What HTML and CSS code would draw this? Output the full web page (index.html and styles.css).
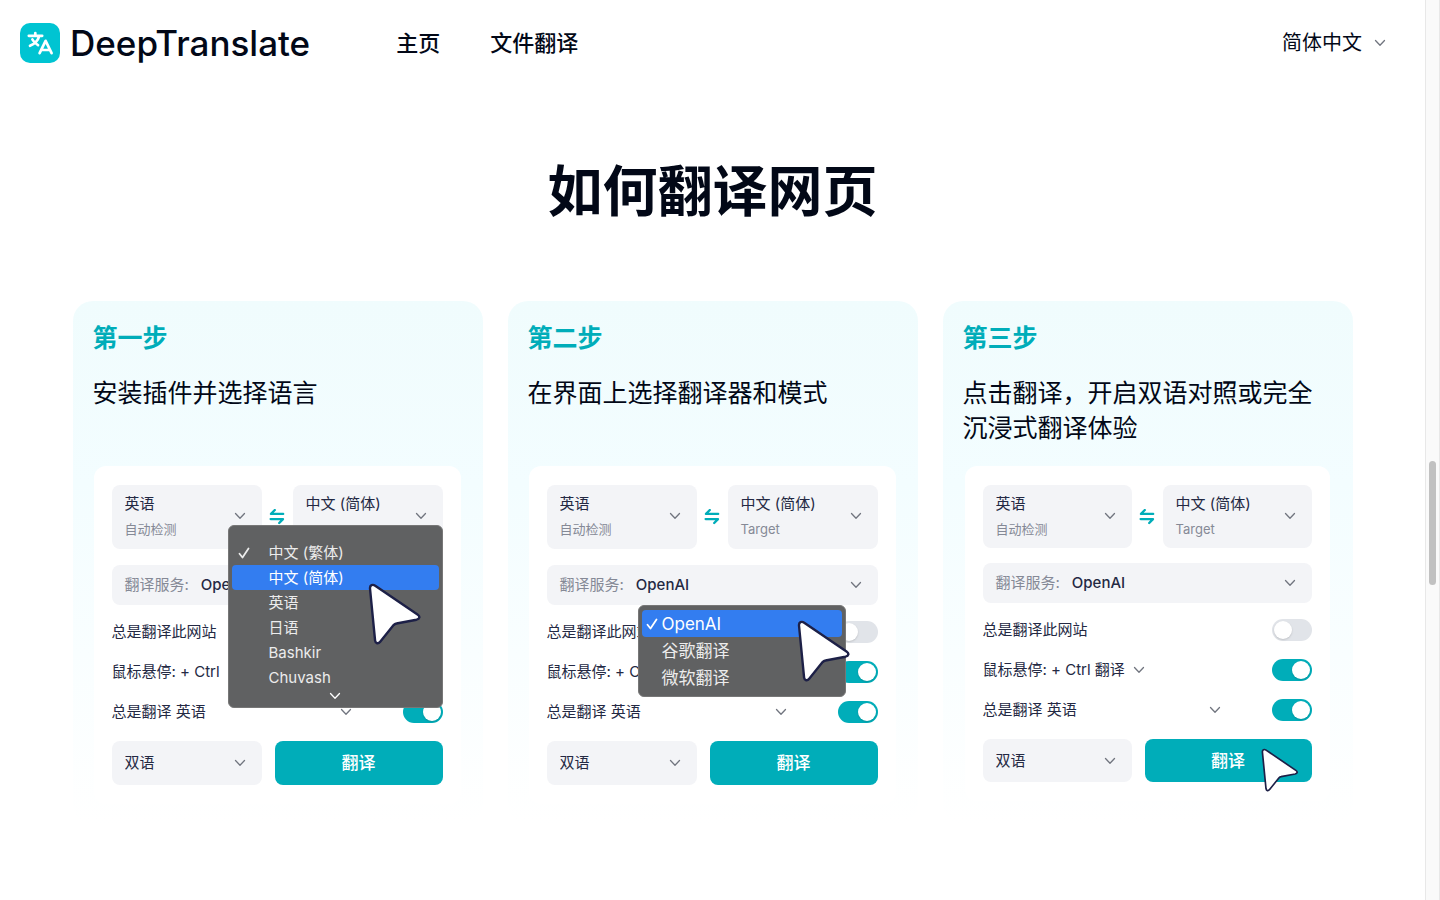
FILE: index.html
```html
<!DOCTYPE html>
<html lang="zh-CN">
<head>
    <meta charset="UTF-8">
    <meta name="viewport" content="width=device-width, initial-scale=1.0">
    <title>DeepTranslate</title>
    <link rel="stylesheet" href="styles.css">
</head>
<body>
    <!-- 公用图标 -->
    <svg class="sprite" aria-hidden="true">
        <symbol id="chevron" viewBox="0 0 12 8"><path d="M1.500 1.500 6 6.200l4.500-4.700" fill="none" stroke="currentColor" stroke-width="1.300" stroke-linecap="round" stroke-linejoin="round"/></symbol>
        <symbol id="swap" viewBox="0 0 16 16"><path d="M5.800 1 2 4.900h12.200M1.600 10.100H14l-3.800 3.900" fill="none" stroke="currentColor" stroke-width="2.300" stroke-linecap="round" stroke-linejoin="round"/></symbol>
        <symbol id="check" viewBox="0 0 12 12"><path d="M1.500 6.800 4.500 10.500 10.500 1.500" fill="none" stroke="currentColor" stroke-width="1.800" stroke-linecap="round" stroke-linejoin="round"/></symbol>
        <symbol id="cursor" viewBox="0 0 54 62"><path d="M2 5.500C1.700 2.200 4.600.900 7.200 2.700L49.500 31.500c3 2 2.200 4.500-1 5.200L28.500 40.500c-1.200.200-2 .600-2.900 1.600L12.200 58.800c-2 2.400-4.700 1.800-5.100-1.200z" fill="#fff" stroke="#1d2047" stroke-width="2.400"/></symbol>
    </svg>

    <div class="page">
        <!-- 顶部导航 -->
        <header class="header">
            <a class="logo" href="#">
                <svg class="logo-icon" viewBox="0 0 40 40" aria-hidden="true">
                    <rect width="40" height="40" rx="10" fill="#00c4d2"/>
                    <path d="M8.800 12.800h13.400M15.300 10v2.500M19.200 13.200c-1.200 4.300-4.400 7.700-9.200 9.600M12.400 16.500c1.300 2.500 3.200 4.300 5.600 5.700M19.600 30.200l6-12.400 6 12.400M21.800 27h7.800" fill="none" stroke="#fff" stroke-width="2.700" stroke-linecap="round" stroke-linejoin="round"/>
                </svg>
                <span>DeepTranslate</span>
            </a>
            <nav class="nav">
                <a href="#">主页</a>
                <a href="#">文件翻译</a>
            </nav>
            <button class="language" type="button">
                简体中文
                <svg class="chevron" aria-hidden="true"><use href="#chevron"/></svg>
            </button>
        </header>

        <main class="guide">
            <h1>如何翻译网页</h1>
            <div class="steps">
                <!-- 第一步 -->
                <section class="step">
                    <h2>第一步</h2>
                    <p>安装插件并选择语言</p>
                    <div class="panel">
                        <div class="languages">
                            <label class="field tall">
                                <select><option>英语</option></select>
                                <span class="hint">自动检测</span>
                                <svg class="chevron" aria-hidden="true"><use href="#chevron"/></svg>
                            </label>
                            <svg class="swap" aria-hidden="true"><use href="#swap"/></svg>
                            <label class="field tall">
                                <select><option>中文 (简体)</option></select>
                                <svg class="chevron" aria-hidden="true"><use href="#chevron"/></svg>
                            </label>
                        </div>
                        <label class="field service">
                            <span class="service-name">翻译服务:</span>
                            <select><option>OpenAI</option></select>
                            <svg class="chevron" aria-hidden="true"><use href="#chevron"/></svg>
                        </label>
                        <div class="options">
                            <div class="option"><span>总是翻译此网站</span></div>
                            <div class="option"><span>鼠标悬停: + Ctrl</span></div>
                            <div class="option">
                                <label for="always-1">总是翻译 英语</label>
                                <svg class="chevron far" aria-hidden="true"><use href="#chevron"/></svg>
                                <input class="toggle" id="always-1" type="checkbox" checked>
                            </div>
                        </div>
                        <div class="actions">
                            <label class="field">
                                <select aria-label="显示模式"><option>双语</option></select>
                                <svg class="chevron" aria-hidden="true"><use href="#chevron"/></svg>
                            </label>
                            <button class="translate" type="button">翻译</button>
                        </div>
                        <div class="menu language-menu">
                            <ul>
                                <li><svg class="check" aria-hidden="true"><use href="#check"/></svg>中文 (繁体)</li>
                                <li class="active">中文 (简体)</li>
                                <li>英语</li>
                                <li>日语</li>
                                <li>Bashkir</li>
                                <li>Chuvash</li>
                            </ul>
                            <svg class="chevron more" aria-hidden="true"><use href="#chevron"/></svg>
                        </div>
                        <svg class="cursor cursor-language" aria-hidden="true"><use href="#cursor"/></svg>
                    </div>
                </section>

                <!-- 第二步 -->
                <section class="step">
                    <h2>第二步</h2>
                    <p>在界面上选择翻译器和模式</p>
                    <div class="panel">
                        <div class="languages">
                            <label class="field tall">
                                <select><option>英语</option></select>
                                <span class="hint">自动检测</span>
                                <svg class="chevron" aria-hidden="true"><use href="#chevron"/></svg>
                            </label>
                            <svg class="swap" aria-hidden="true"><use href="#swap"/></svg>
                            <label class="field tall">
                                <select><option>中文 (简体)</option></select>
                                <span class="hint">Target</span>
                                <svg class="chevron" aria-hidden="true"><use href="#chevron"/></svg>
                            </label>
                        </div>
                        <label class="field service">
                            <span class="service-name">翻译服务:</span>
                            <select><option>OpenAI</option></select>
                            <svg class="chevron" aria-hidden="true"><use href="#chevron"/></svg>
                        </label>
                        <div class="options">
                            <div class="option">
                                <label for="site-2">总是翻译此网站</label>
                                <input class="toggle" id="site-2" type="checkbox">
                            </div>
                            <div class="option">
                                <label for="hover-2">鼠标悬停: + Ctrl</label>
                                <input class="toggle" id="hover-2" type="checkbox" checked>
                            </div>
                            <div class="option">
                                <label for="always-2">总是翻译 英语</label>
                                <svg class="chevron far" aria-hidden="true"><use href="#chevron"/></svg>
                                <input class="toggle" id="always-2" type="checkbox" checked>
                            </div>
                        </div>
                        <div class="actions">
                            <label class="field">
                                <select aria-label="显示模式"><option>双语</option></select>
                                <svg class="chevron" aria-hidden="true"><use href="#chevron"/></svg>
                            </label>
                            <button class="translate" type="button">翻译</button>
                        </div>
                        <div class="menu service-menu">
                            <ul>
                                <li class="active"><svg class="check" aria-hidden="true"><use href="#check"/></svg>OpenAI</li>
                                <li>谷歌翻译</li>
                                <li>微软翻译</li>
                            </ul>
                        </div>
                        <svg class="cursor cursor-service" aria-hidden="true"><use href="#cursor"/></svg>
                    </div>
                </section>

                <!-- 第三步 -->
                <section class="step">
                    <h2>第三步</h2>
                    <p>点击翻译，开启双语对照或完全沉浸式翻译体验</p>
                    <div class="panel compact">
                        <div class="languages">
                            <label class="field tall">
                                <select><option>英语</option></select>
                                <span class="hint">自动检测</span>
                                <svg class="chevron" aria-hidden="true"><use href="#chevron"/></svg>
                            </label>
                            <svg class="swap" aria-hidden="true"><use href="#swap"/></svg>
                            <label class="field tall">
                                <select><option>中文 (简体)</option></select>
                                <span class="hint">Target</span>
                                <svg class="chevron" aria-hidden="true"><use href="#chevron"/></svg>
                            </label>
                        </div>
                        <label class="field service">
                            <span class="service-name">翻译服务:</span>
                            <select><option>OpenAI</option></select>
                            <svg class="chevron" aria-hidden="true"><use href="#chevron"/></svg>
                        </label>
                        <div class="options">
                            <div class="option">
                                <label for="site-3">总是翻译此网站</label>
                                <input class="toggle" id="site-3" type="checkbox">
                            </div>
                            <div class="option">
                                <label for="hover-3">鼠标悬停: + Ctrl 翻译</label>
                                <svg class="chevron" aria-hidden="true"><use href="#chevron"/></svg>
                                <input class="toggle" id="hover-3" type="checkbox" checked>
                            </div>
                            <div class="option">
                                <label for="always-3">总是翻译 英语</label>
                                <svg class="chevron far" aria-hidden="true"><use href="#chevron"/></svg>
                                <input class="toggle" id="always-3" type="checkbox" checked>
                            </div>
                        </div>
                        <div class="actions">
                            <label class="field">
                                <select aria-label="显示模式"><option>双语</option></select>
                                <svg class="chevron" aria-hidden="true"><use href="#chevron"/></svg>
                            </label>
                            <button class="translate" type="button">翻译</button>
                        </div>
                        <svg class="cursor cursor-translate" aria-hidden="true"><use href="#cursor"/></svg>
                    </div>
                </section>
            </div>
        </main>
    </div>

    <!-- 滚动条 -->
    <div class="scrollbar"><div class="thumb"></div></div>
</body>
</html>
```

FILE: styles.css
```css
* {
    margin: 0;
    padding: 0;
    box-sizing: border-box;
}

body {
    display: flex;
    min-height: 100vh;
    background: #fff;
    color: #020817;
    font-family: Inter, "Noto Sans CJK SC", sans-serif;
}

a {
    color: inherit;
    text-decoration: none;
}

button,
select {
    border: 0;
    background: none;
    color: inherit;
    font: inherit;
}

ul {
    list-style: none;
}

.sprite {
    position: absolute;
    width: 0;
    height: 0;
}

.page {
    flex: 1;
    min-width: 0;
}

/* 顶部导航 */
.header {
    display: flex;
    align-items: center;
    height: 86px;
    padding: 0 39px 0 20px;
    line-height: 24px;
}

.logo {
    display: flex;
    align-items: center;
    gap: 10px;
    font-size: 35px;
    font-weight: 500;
}

.logo-icon {
    width: 40px;
    height: 40px;
}

.nav {
    display: flex;
    gap: 50px;
    margin-left: 86px;
    font-size: 22px;
    font-weight: 500;
}

.language {
    display: flex;
    align-items: center;
    gap: 12px;
    margin-left: auto;
    font-size: 20px;
}

.chevron {
    flex: none;
    width: 12px;
    height: 8px;
    color: #71757f;
}

/* 步骤说明 */
.guide {
    max-width: 1280px;
    margin: 0 auto;
    padding-top: 65px;
}

.guide h1 {
    font-size: 55px;
    font-weight: 700;
    line-height: 80px;
    text-align: center;
}

.steps {
    display: grid;
    grid-template-columns: repeat(3, 1fr);
    gap: 25px;
    margin-top: 70px;
}

.step {
    padding: 20px;
    border-radius: 20px;
    background: linear-gradient(#f0fcfd, #f3fdff 35%, #fff);
}

.step h2 {
    margin-bottom: 20px;
    color: #00adb9;
    font-size: 25px;
    font-weight: 700;
    line-height: 35px;
}

.step p {
    min-height: 70px;
    margin-bottom: 20px;
    font-size: 25px;
    line-height: 35px;
}

/* 插件面板 */
.panel {
    position: relative;
    margin: 0 2px 0 1px;
    padding: 19px 18px;
    border-radius: 12px;
    background: #fff;
    color: #242943;
    font-size: 15px;
    line-height: 20px;
}

.languages {
    display: flex;
    align-items: center;
    justify-content: space-between;
}

.languages .field {
    width: 150px;
}

.field {
    display: flex;
    align-items: center;
    height: 44px;
    padding: 0 16px 0 13px;
    border-radius: 8px;
    background: #f3f4f7;
}

.field select {
    flex: 1;
    min-width: 0;
    appearance: none;
    outline: 0;
}

.field.tall {
    display: grid;
    grid-template-columns: 1fr auto;
    grid-template-rows: 26px 24px;
    height: 64px;
    padding-top: 6px;
    align-content: start;
}

.tall .chevron {
    grid-column: 2;
    grid-row: 1 / 3;
}

.hint {
    color: #858996;
    font-size: 13px;
}

.swap {
    width: 16px;
    height: 16px;
    color: #00adb9;
}

.service {
    height: 40px;
    margin-top: 16px;
    gap: 12px;
    font-weight: 500;
}

.service-name {
    color: #858996;
    font-weight: 400;
}

.options {
    display: grid;
    gap: 18px;
    margin: 16px 0 18px;
}

.option {
    display: flex;
    align-items: center;
    gap: 8px;
    height: 22px;
}

.option .far {
    margin-left: auto;
}

.toggle {
    width: 40px;
    height: 22px;
    margin-left: auto;
    padding: 2px;
    border-radius: 11px;
    background: #e1e4e9;
    appearance: none;
}

.toggle::before {
    content: "";
    display: block;
    width: 18px;
    height: 18px;
    border-radius: 50%;
    background: #fff;
    box-shadow: 0 1px 2px rgba(0, 0, 0, 0.15);
}

.toggle:checked {
    background: #00adb9;
}

.toggle:checked::before {
    margin-left: auto;
}

.far + .toggle {
    margin-left: 43px;
}

.actions {
    display: grid;
    grid-template-columns: 150px 1fr;
    gap: 13px;
}

.translate {
    border-radius: 8px;
    background: #00adb9;
    color: #fff;
    font-size: 17px;
    font-weight: 500;
}

.compact {
    margin: 0 3px 0 2px;
}

.compact .languages .field {
    width: 149px;
    height: 63px;
}

.compact .service {
    margin-top: 15px;
}

.compact .options {
    margin-bottom: 18px;
}

.compact .actions {
    grid-template-columns: 149px 1fr;
}

.compact .actions .field {
    height: 43px;
}

/* 下拉菜单 */
.menu {
    position: absolute;
    border: 1px solid #777;
    border-radius: 6px;
    background: #606162;
    color: #ececec;
}

.menu li {
    display: flex;
    align-items: center;
    border-radius: 4px;
}

.menu .active {
    background: #337df0;
    color: #fff;
}

.check {
    width: 12px;
    height: 12px;
}

.language-menu {
    top: 59px;
    right: 18px;
    width: 215px;
    padding: 14px 3px 7px;
}

.language-menu li {
    height: 25px;
    padding-left: 37px;
}

.language-menu .check {
    margin: 0 19px 0 -31px;
}

.more {
    display: block;
    margin: 2px auto 0;
    color: #fff;
}

.service-menu {
    top: 139px;
    left: 109px;
    width: 208px;
    padding: 4px 3px 5px;
    font-size: 17px;
}

.service-menu li {
    height: 27px;
    padding-left: 20px;
}

.service-menu .check {
    margin: 0 4px 0 -16px;
}

/* 鼠标指针 */
.cursor {
    position: absolute;
    width: 54px;
    height: 62px;
}

.cursor-language {
    top: 117px;
    left: 274px;
}

.cursor-service {
    top: 154px;
    left: 268px;
}

.cursor-translate {
    top: 282px;
    left: 296px;
    width: 38px;
    height: 44px;
}

/* 滚动条 */
.scrollbar {
    width: 15px;
    padding: 461px 3px 0;
    border: solid #e8e8e8;
    border-width: 0 1px;
    background: #fafafa;
}

.thumb {
    height: 124px;
    border-radius: 4px;
    background: #c1c1c1;
}
```
